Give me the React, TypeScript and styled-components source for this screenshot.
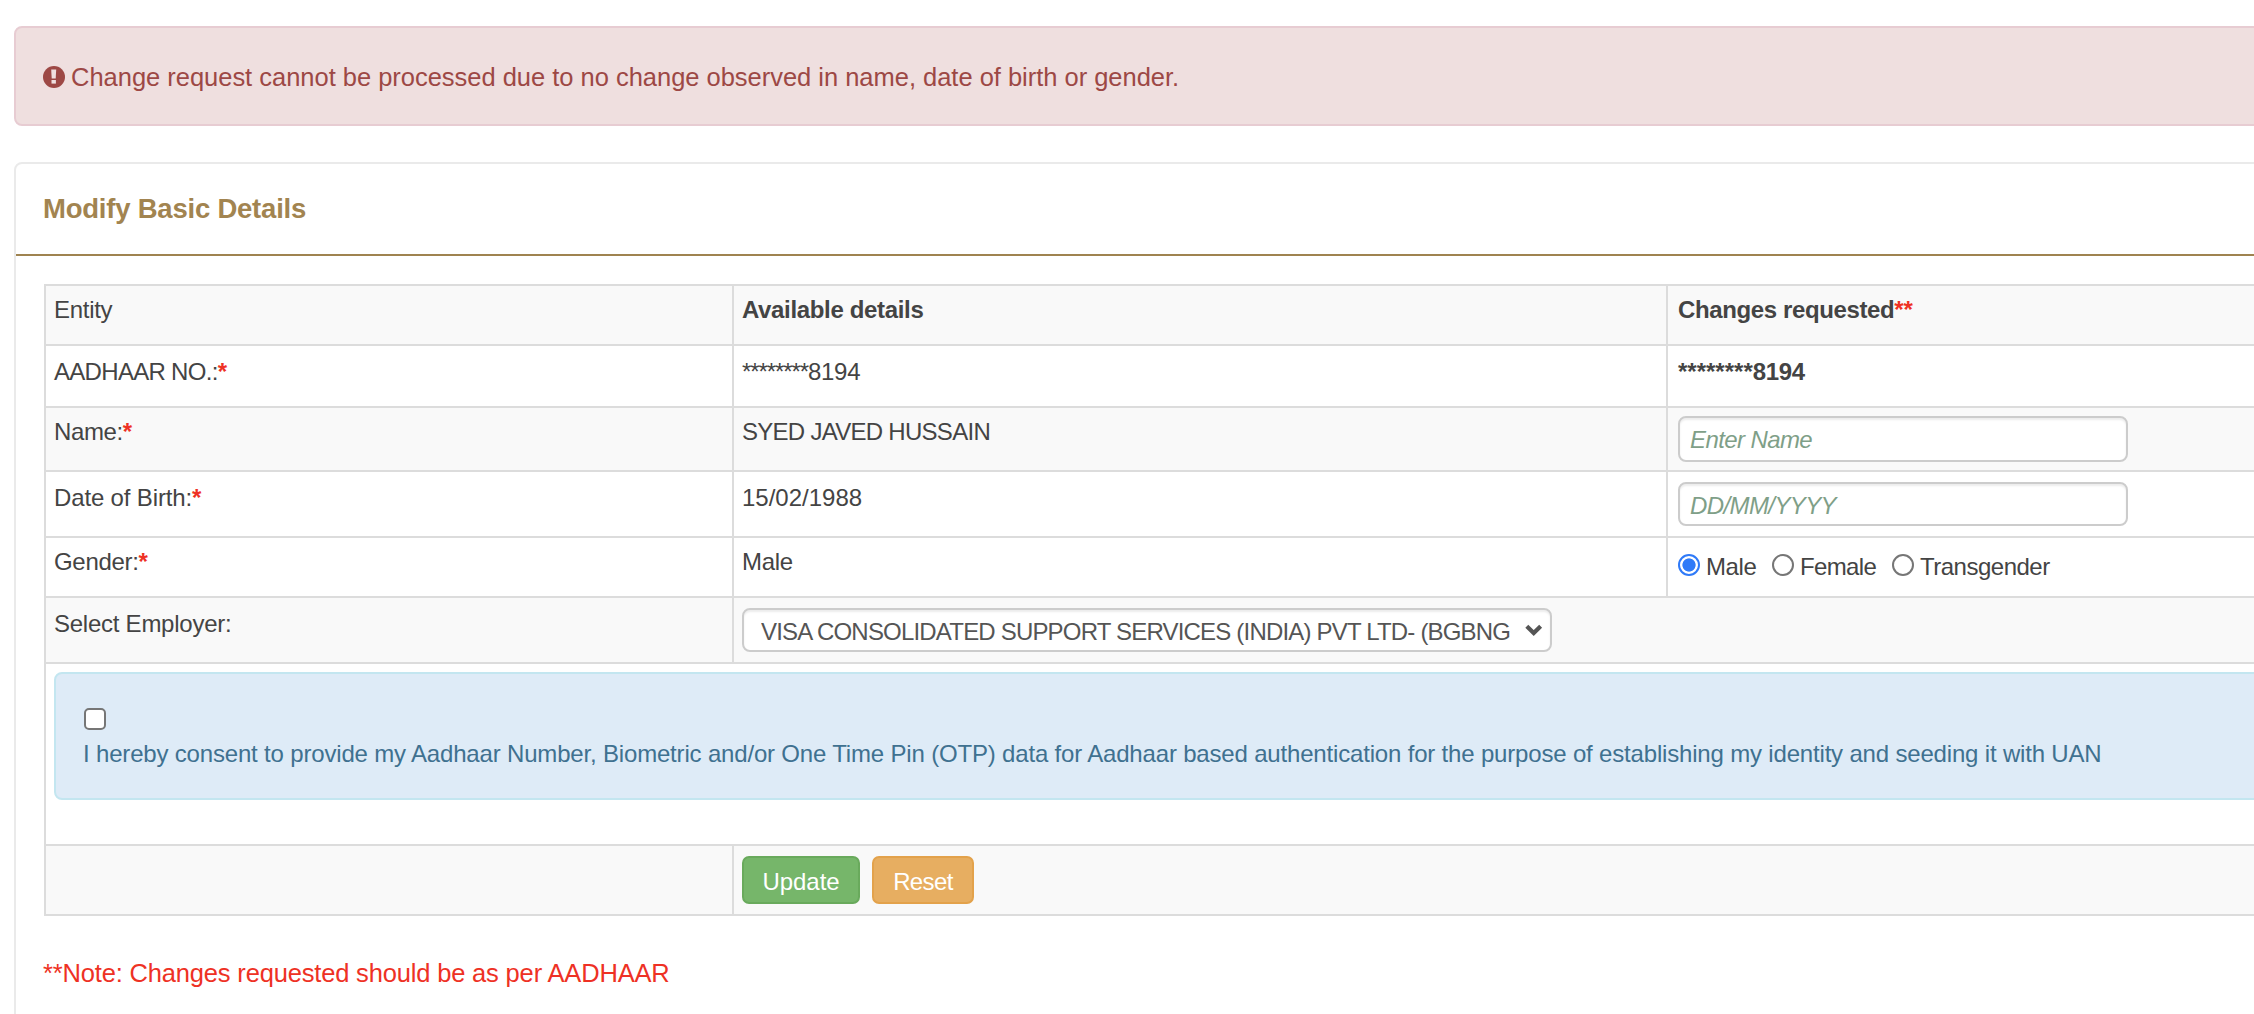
import React from "react";
import styled, { createGlobalStyle, css } from "styled-components";

const Global = createGlobalStyle`
  * { box-sizing: border-box; }
  html, body { margin: 0; background: #fff; overflow: hidden; }
  body {
    font-family: "Liberation Sans", Arial, sans-serif;
    font-size: 24px;
    line-height: 34px;
    color: #444;
  }
`;

const Page = styled.div`
  width: 2320px;
  height: 1014px;
  padding: 26px 0 0 14px;
  overflow: hidden;
`;

const Text = styled.span<{ $ls?: number }>`
  letter-spacing: ${(p) => p.$ls ?? 0}px;
  white-space: nowrap;
`;

const Alert = styled.div`
  height: 100px;
  display: flex;
  align-items: center;
  gap: 6px;
  padding: 2px 27px 0;
  border: 2px solid #e7ccd2;
  border-radius: 8px;
  background: #efdfdf;
  color: #9d4845;
  font-size: 25.5px;
`;

const Panel = styled.section`
  margin-top: 36px;
  height: 900px;
  border: 2px solid #eaeaea;
  border-radius: 8px;
`;

const PanelHead = styled.header`
  height: 92px;
  padding: 28px 27px 0;
  border-bottom: 2px solid #9f8350;
`;

const Title = styled.h2`
  margin: 0;
  font-size: 27.5px;
  line-height: 34px;
  font-weight: 700;
  letter-spacing: -0.22px;
  color: #a28450;
`;

const PanelBody = styled.div`
  padding: 28px 28px 0;
`;

const Table = styled.div`
  width: 2260px;
  border: 2px solid #dcdcdc;
  border-top: 0;
`;

const Row = styled.div<{ $h: number; $pad?: number; $shade?: boolean }>`
  display: flex;
  height: ${(p) => p.$h}px;
  border-top: 2px solid #dcdcdc;
  background: ${(p) => (p.$shade ? "#f9f9f9" : "#fff")};
  --pad: ${(p) => p.$pad ?? 0}px;
`;

const Cell = styled.div<{ $w?: number; $bold?: boolean; $control?: number }>`
  ${(p) => (p.$w ? css`flex: 0 0 ${p.$w}px;` : css`flex: 1;`)}
  padding: ${(p) => (p.$control !== undefined ? `${p.$control}px` : "var(--pad)")} 8px 0;
  font-weight: ${(p) => (p.$bold ? 700 : 400)};
  white-space: nowrap;
  & + & { border-left: 2px solid #dcdcdc; }
  & + & + & { padding-left: 10px; }
`;

const Star = styled.span`
  color: #ee3124;
  font-weight: 700;
`;

const Field = styled.input<{ $h: number; $top: number }>`
  display: block;
  width: 450px;
  height: ${(p) => p.$h}px;
  padding: ${(p) => p.$top}px 10px 0;
  border: 2px solid #ccc;
  border-radius: 8px;
  background: #fff;
  box-shadow: inset 0 2px 2px rgba(0, 0, 0, 0.075);
  font: italic 24px "Liberation Sans", Arial, sans-serif;
  letter-spacing: -0.6px;
  color: #555;
  outline: none;
  &::placeholder { color: #7f9f88; opacity: 1; }
`;

const Radios = styled.div`
  display: flex;
  align-items: flex-start;
`;

const RadioLabel = styled.label<{ $w: number }>`
  display: flex;
  width: ${(p) => p.$w}px;
  gap: 6px;
`;

const Radio = styled.input`
  appearance: none;
  flex: none;
  width: 22px;
  height: 22px;
  margin: 4px 0 0;
  border: 2px solid #767676;
  border-radius: 50%;
  background: #fff;
  &:checked {
    border-color: #2f7af8;
    background: radial-gradient(circle, #2f7af8 6.2px, #fff 7px);
  }
`;

const SelectBox = styled.div`
  display: flex;
  align-items: center;
  width: 810px;
  height: 44px;
  padding: 0 7px 0 17px;
  border: 2px solid #ccc;
  border-radius: 8px;
  background: #fff;
  box-shadow: inset 0 2px 2px rgba(0, 0, 0, 0.075);
`;

const Select = styled.select`
  appearance: none;
  flex: none;
  width: 752px;
  height: 40px;
  padding: 3px 0 0;
  margin: 0 12px 0 0;
  border: 0;
  background: transparent;
  font: 24px "Liberation Sans", Arial, sans-serif;
  letter-spacing: -0.81px;
  color: #555;
`;

const Consent = styled.div`
  height: 128px;
  padding: 34px 27px 0;
  border: 2px solid #c3e6f0;
  border-radius: 8px;
  background: #deebf7;
  color: #3f7190;
  font-size: 24px;
`;

const Check = styled.input`
  appearance: none;
  display: block;
  width: 22px;
  height: 22px;
  margin: 0 0 7px 1px;
  border: 2px solid #767676;
  border-radius: 5px;
  background: #fff;
`;

const Buttons = styled.div`
  display: flex;
  gap: 12px;
`;

const Button = styled.button<{ $w: number; $bg: string; $edge: string; $ls: number }>`
  width: ${(p) => p.$w}px;
  height: 48px;
  padding: 3px 0 0;
  border: 2px solid ${(p) => p.$edge};
  border-radius: 7px;
  background: ${(p) => p.$bg};
  color: #fff;
  font: 24px "Liberation Sans", Arial, sans-serif;
  letter-spacing: ${(p) => p.$ls}px;
`;

const Note = styled.p`
  margin: 40px 0 0 -1px;
  font-size: 25.5px;
  color: #ee3124;
`;

const COL1 = 686;
const COL2 = 934;

function AlertIcon() {
  return (
    <svg width="22" height="30" viewBox="0 0 22 30">
      <circle cx="11" cy="15" r="11" fill="#9d4845" />
      <path d="M8.2 7.4h5l-.5 9.2H8.7z" fill="#efdfdf" />
      <rect x="8.5" y="18" width="4.4" height="3.6" fill="#efdfdf" />
    </svg>
  );
}

export default function App() {
  return (
    <Page>
      <Global />
      <Alert>
        <AlertIcon />
        <Text $ls={-0.02}>
          Change request cannot be processed due to no change observed in name, date of birth or gender.
        </Text>
      </Alert>
      <Panel>
        <PanelHead>
          <Title>Modify Basic Details</Title>
        </PanelHead>
        <PanelBody>
          <Table>
            <Row $h={60} $pad={7} $shade>
              <Cell $w={COL1}><Text $ls={-0.28}>Entity</Text></Cell>
              <Cell $w={COL2} $bold><Text $ls={-0.34}>Available details</Text></Cell>
              <Cell $bold><Text $ls={-0.38}>Changes requested</Text><Star>**</Star></Cell>
            </Row>
            <Row $h={62} $pad={9}>
              <Cell $w={COL1}><Text $ls={-0.7}>AADHAAR NO.:</Text><Star>*</Star></Cell>
              <Cell $w={COL2}><Text $ls={-1.1}>********</Text><Text $ls={-0.25}>8194</Text></Cell>
              <Cell $bold><Text>********</Text><Text $ls={-0.3}>8194</Text></Cell>
            </Row>
            <Row $h={64} $pad={7} $shade>
              <Cell $w={COL1}><Text $ls={-0.4}>Name:</Text><Star>*</Star></Cell>
              <Cell $w={COL2}><Text $ls={-0.72}>SYED JAVED HUSSAIN</Text></Cell>
              <Cell $control={8}><Field $h={46} $top={1} placeholder="Enter Name" /></Cell>
            </Row>
            <Row $h={66} $pad={9}>
              <Cell $w={COL1}><Text $ls={-0.15}>Date of Birth:</Text><Star>*</Star></Cell>
              <Cell $w={COL2}><Text>15/02/1988</Text></Cell>
              <Cell $control={10}><Field $h={44} $top={3} placeholder="DD/MM/YYYY" /></Cell>
            </Row>
            <Row $h={60} $pad={7}>
              <Cell $w={COL1}><Text $ls={-0.32}>Gender:</Text><Star>*</Star></Cell>
              <Cell $w={COL2}><Text $ls={-0.3}>Male</Text></Cell>
              <Cell $control={12}>
                <Radios>
                  <RadioLabel $w={94}><Radio type="radio" name="g" defaultChecked /><Text $ls={-0.4}>Male</Text></RadioLabel>
                  <RadioLabel $w={120}><Radio type="radio" name="g" /><Text $ls={-0.65}>Female</Text></RadioLabel>
                  <RadioLabel $w={170}><Radio type="radio" name="g" /><Text $ls={-0.5}>Transgender</Text></RadioLabel>
                </Radios>
              </Cell>
            </Row>
            <Row $h={66} $pad={9} $shade>
              <Cell $w={COL1}><Text $ls={-0.25}>Select Employer:</Text></Cell>
              <Cell $control={10}>
                <SelectBox>
                  <Select>
                    <option>VISA CONSOLIDATED SUPPORT SERVICES (INDIA) PVT LTD- (BGBNG</option>
                  </Select>
                  <svg width="19" height="14" viewBox="0 0 19 14">
                    <path d="M1.9 3 9.2 10.2 16.5 3" fill="none" stroke="#555" strokeWidth="4.4" />
                  </svg>
                </SelectBox>
              </Cell>
            </Row>
            <Row $h={182}>
              <Cell $control={8}>
                <Consent>
                  <Check type="checkbox" />
                  <Text $ls={-0.177}>
                    I hereby consent to provide my Aadhaar Number, Biometric and/or One Time Pin (OTP) data for Aadhaar based authentication for the purpose of establishing my identity and seeding it with UAN
                  </Text>
                </Consent>
              </Cell>
            </Row>
            <Row $h={70} $shade>
              <Cell $w={COL1} />
              <Cell $control={10}>
                <Buttons>
                  <Button $w={118} $bg="#76b66a" $edge="#69aa5c" $ls={-0.05}>Update</Button>
                  <Button $w={102} $bg="#e7ae61" $edge="#e3a24b" $ls={-0.6}>Reset</Button>
                </Buttons>
              </Cell>
            </Row>
          </Table>
          <Note><Text $ls={-0.17}>**Note: Changes requested should be as per AADHAAR</Text></Note>
        </PanelBody>
      </Panel>
    </Page>
  );
}
